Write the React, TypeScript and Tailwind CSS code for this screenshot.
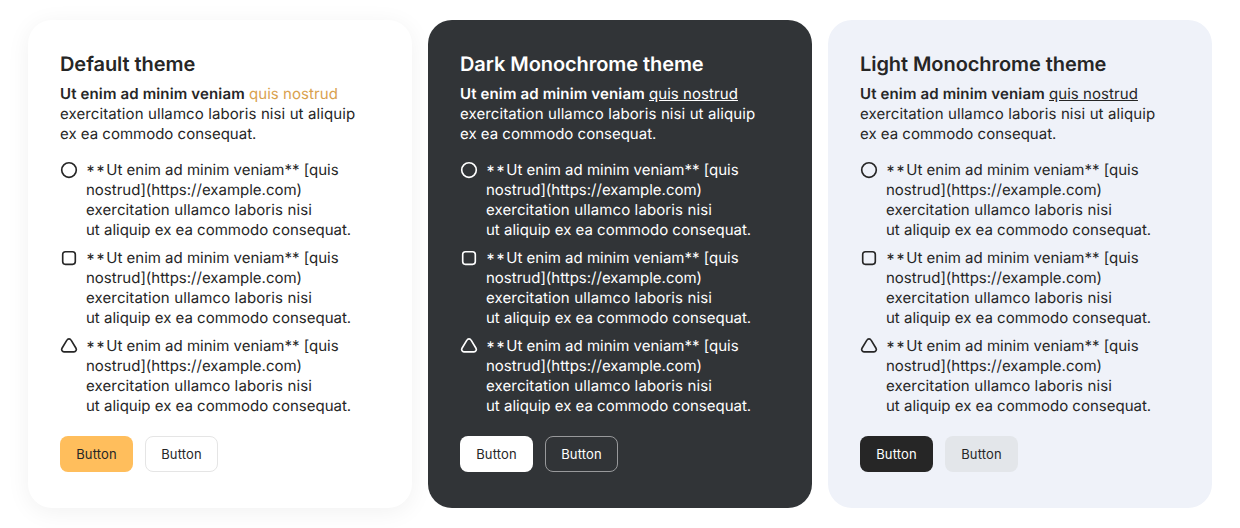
import type { ReactNode } from "react";

type Theme = {
  title: string;
  card: string;
  link: string;
  primary: string;
  secondary: string;
};

const themes: Theme[] = [
  {
    title: "Default theme",
    card: "bg-white text-[#262626] shadow-[0px_4px_24px_rgba(0,0,0,0.06)]",
    link: "text-[#d9a14e]",
    primary: "bg-[#ffbe5c] text-[#262626] border-transparent",
    secondary: "bg-transparent text-[#262626] border-[#e5e5e5]",
  },
  {
    title: "Dark Monochrome theme",
    card: "bg-[#313437] text-white",
    link: "underline",
    primary: "bg-white text-[#262626] border-transparent",
    secondary: "bg-transparent text-white border-[#98999b]",
  },
  {
    title: "Light Monochrome theme",
    card: "bg-[#eff2f9] text-[#262626]",
    link: "underline",
    primary: "bg-[#262626] text-white border-transparent",
    secondary: "bg-[#e3e6ea] text-[#262626] border-transparent",
  },
];

const icons: ReactNode[] = [
  <circle key="circle" cx="9" cy="9" r="7.3" />,
  <rect key="square" x="2.7" y="2.7" width="12.6" height="12.6" rx="2.75" />,
  <path key="triangle" d="M6.9 3.1a2.4 2.4 0 0 1 4.2 0l4.9 8.1a2.4 2.4 0 0 1-2.1 3.65H4.1a2.4 2.4 0 0 1-2.1-3.65z" />,
];

function Card({ theme }: { theme: Theme }) {
  return (
    <section className={`flex h-[488px] w-96 flex-col rounded-3xl p-8 ${theme.card}`}>
      <h2 className="text-xl leading-6 font-semibold tracking-[-0.07px]">{theme.title}</h2>
      <p className="mt-2 text-[15px] leading-5">
        <b className="font-semibold tracking-[0.14px]">Ut enim ad minim veniam</b>{" "}
        <a className={`tracking-[0.06px] ${theme.link}`}>quis nostrud</a>
        <br />
        <span className="tracking-[0.1px]">exercitation ullamco laboris nisi ut aliquip</span>
        <br />
        ex ea commodo consequat.
      </p>
      <ul className="mt-4 flex flex-col gap-2">
        {icons.map((icon, index) => (
          <li key={index} className="flex gap-2 text-[15px] leading-5">
            <svg className="mt-px size-[18px] shrink-0" viewBox="0 0 18 18" fill="none" stroke="currentColor" strokeWidth="1.65">
              {icon}
            </svg>
            <span>
              <span className="relative top-[2px] left-[0.5px] text-base leading-none tracking-[2.1px]">**</span>
              Ut enim ad minim veniam** [quis
              <br />
              nostrud](https://example.com)
              <br />
              <span className="tracking-[0.12px]">exercitation ullamco laboris nisi</span>
              <br />
              ut aliquip ex ea commodo consequat.
            </span>
          </li>
        ))}
      </ul>
      <div className="mt-5 flex gap-3">
        <button className={`h-9 w-[73px] rounded-lg border pt-px text-[13px] tracking-[0.15px] ${theme.primary}`}>Button</button>
        <button className={`h-9 w-[73px] rounded-lg border pt-px text-[13px] tracking-[0.15px] ${theme.secondary}`}>Button</button>
      </div>
    </section>
  );
}

export default function App() {
  return (
    <main className="flex h-[528px] justify-center gap-4 bg-white pt-5 font-['Inter',sans-serif] antialiased [text-rendering:geometricPrecision]">
      {themes.map((theme) => (
        <Card key={theme.title} theme={theme} />
      ))}
    </main>
  );
}
